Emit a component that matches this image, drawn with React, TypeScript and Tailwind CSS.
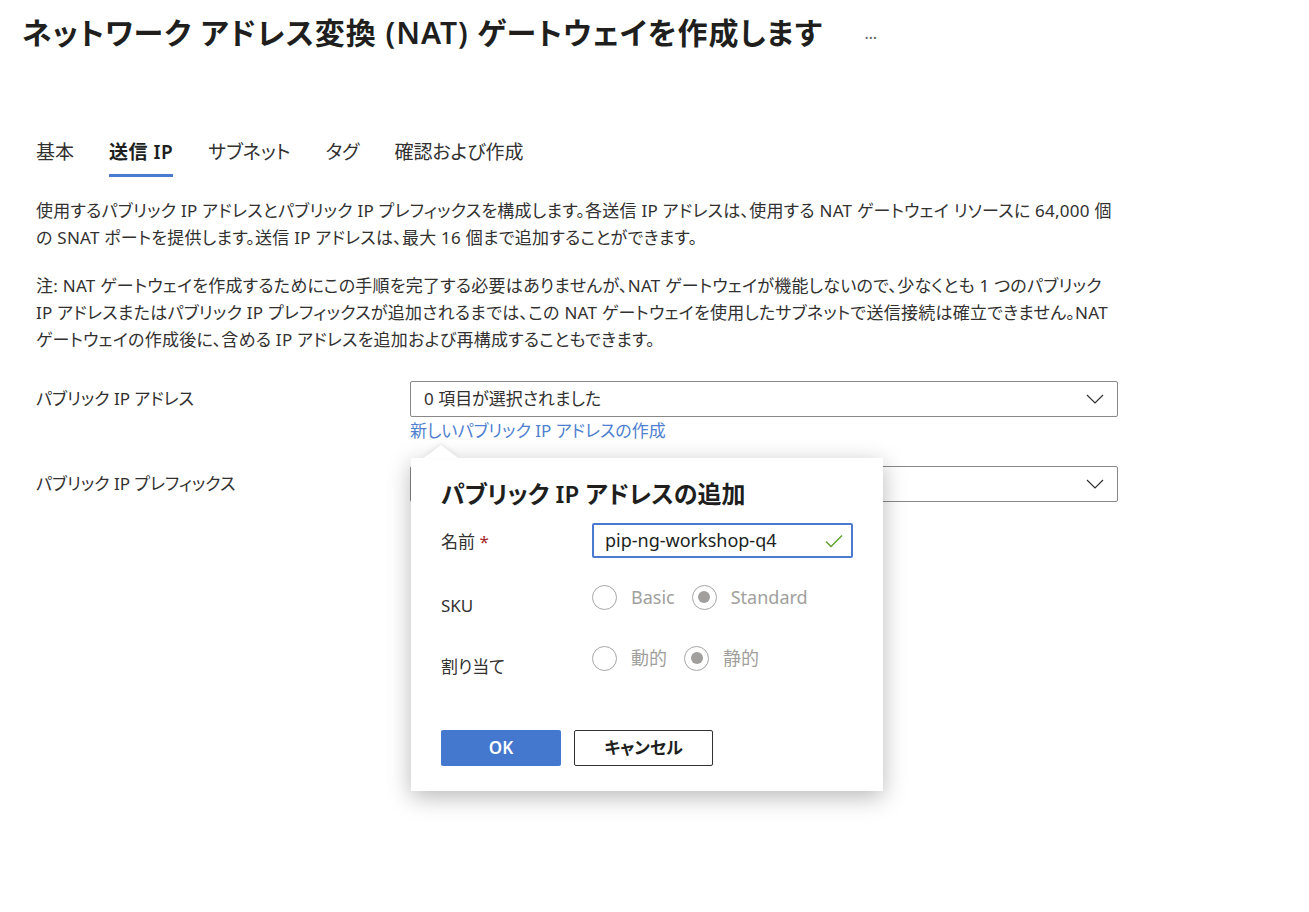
import React from 'react';

const tabs = ['基本', '送信 IP', 'サブネット', 'タグ', '確認および作成'];

function Chevron() {
  return (
    <svg width="18" height="10" viewBox="0 0 18 10" fill="none" className="shrink-0">
      <path d="M1 1l8 8 8-8" stroke="#323130" strokeWidth="1.2" />
    </svg>
  );
}

function Radio({ checked, label }: { checked?: boolean; label: string }) {
  return (
    <div className="flex items-center">
      <span className="w-[25px] h-[25px] rounded-full border border-[#a8a6a4] flex items-center justify-center">
        {checked && <span className="w-[12px] h-[12px] rounded-full bg-[#a19f9d]" />}
      </span>
      <span className="ml-[14px] text-[#a19f9d]">{label}</span>
    </div>
  );
}

export default function App() {
  return (
    <div className="w-[1309px] h-[912px] bg-white text-[#323130] font-['Noto_Sans','Noto_Sans_CJK_JP',sans-serif] [font-feature-settings:'palt'] overflow-hidden">
      {/* Title */}
      <div className="pl-[22px] pt-[13px] flex items-center">
        <h1 className="text-[30px] leading-[40px] font-semibold text-[#201f1e] tracking-[0.95px]">
          ネットワーク アドレス変換 (NAT) ゲートウェイを作成します
        </h1>
        <span className="ml-[42px] text-[16px] text-[#605e5c] tracking-[1px]">…</span>
      </div>

      {/* Tabs */}
      <div className="pl-[36px] mt-[86px] flex gap-[35px] text-[19px]">
        {tabs.map((t, i) => (
          <div key={t} className="flex flex-col">
            <span className={i === 1 ? 'font-semibold text-[#201f1e] leading-[26px] tracking-[0.5px]' : 'leading-[26px]'}>{t}</span>
            <span className={i === 1 ? 'mt-[9px] h-[3px] bg-[#4a7bd0]' : 'mt-[9px] h-[3px]'} />
          </div>
        ))}
      </div>

      {/* Description */}
      <div className="pl-[36px] mt-[20px] text-[17px] leading-[27px] whitespace-nowrap tracking-[0.25px]">
        <p>使用するパブリック IP アドレスとパブリック IP プレフィックスを構成します。各送信 IP アドレスは、使用する NAT ゲートウェイ リソースに 64,000 個</p>
        <p>の SNAT ポートを提供します。送信 IP アドレスは、最大 16 個まで追加することができます。</p>
        <p className="mt-[21px]">注: NAT ゲートウェイを作成するためにこの手順を完了する必要はありませんが、NAT ゲートウェイが機能しないので、少なくとも 1 つのパブリック</p>
        <p>IP アドレスまたはパブリック IP プレフィックスが追加されるまでは、この NAT ゲートウェイを使用したサブネットで送信接続は確立できません。NAT</p>
        <p>ゲートウェイの作成後に、含める IP アドレスを追加および再構成することもできます。</p>
      </div>

      {/* Form */}
      <div className="relative mt-[28px] text-[17px]">
        <div className="flex pl-[36px]">
          <div className="w-[374px] pt-[6px] leading-[24px]">パブリック IP アドレス</div>
          <div className="w-[708px]">
            <div className="h-[36px] border border-[#8a8886] rounded-[2px] flex items-center justify-between pl-[13px] pr-[13px]">
              <span>0 項目が選択されました</span>
              <Chevron />
            </div>
            <div className="mt-[2px] text-[#4f7fd0] leading-[24px]">新しいパブリック IP アドレスの作成</div>
          </div>
        </div>

        <div className="flex pl-[36px] mt-[23px]">
          <div className="w-[374px] pt-[6px] leading-[24px]">パブリック IP プレフィックス</div>
          <div className="w-[708px]">
            <div className="h-[36px] border border-[#8a8886] rounded-[2px] flex items-center justify-end pr-[13px]">
              <Chevron />
            </div>
          </div>
        </div>

        {/* Callout */}
        <div className="absolute left-[411px] top-[77px] w-[472px] h-[333px] bg-white shadow-[0_6px_22px_rgba(0,0,0,0.28)] pl-[30px] pt-[18px]">
          <div className="absolute -top-[13px] left-[13px] w-0 h-0 border-l-[17px] border-r-[17px] border-b-[13px] border-l-transparent border-r-transparent border-b-white [filter:drop-shadow(0_-2px_2px_rgba(0,0,0,0.08))]" />
          <h2 className="text-[24px] leading-[36px] font-semibold text-[#201f1e]">パブリック IP アドレスの追加</h2>

          <div className="flex items-center mt-[11px]">
            <div className="w-[151px] pt-[2px]">
              名前 <span className="text-[#a4262c]">*</span>
            </div>
            <div className="w-[261px] h-[35px] border-2 border-[#4a7bd0] rounded-[2px] flex items-center justify-between pl-[11px] pr-[8px] text-[18px] text-[#201f1e]">
              <span>pip-ng-workshop-q4</span>
              <svg width="18" height="14" viewBox="0 0 18 14" fill="none">
                <path d="M1 7.5l5 5L17 1.5" stroke="#5ea02a" strokeWidth="1.4" />
              </svg>
            </div>
          </div>

          <div className="flex mt-[25px]">
            <div className="w-[151px] pt-[11px] leading-[24px]">SKU</div>
            <div className="flex gap-[17px] items-center h-[28px] text-[18px]">
              <Radio label="Basic" />
              <Radio checked label="Standard" />
            </div>
          </div>

          <div className="flex mt-[26px]">
            <div className="w-[151px] pt-[11px] leading-[24px]">割り当て</div>
            <div className="flex gap-[17px] items-center h-[28px] text-[18px]">
              <Radio label="動的" />
              <Radio checked label="静的" />
            </div>
          </div>

          <div className="flex gap-[13px] mt-[51px]">
            <button className="w-[120px] h-[36px] bg-[#4477ce] rounded-[2px] text-white font-semibold text-[17px]">OK</button>
            <button className="w-[139px] h-[36px] border border-[#323130] rounded-[2px] text-[#201f1e] font-semibold text-[17px]">キャンセル</button>
          </div>
        </div>
      </div>
    </div>
  );
}
